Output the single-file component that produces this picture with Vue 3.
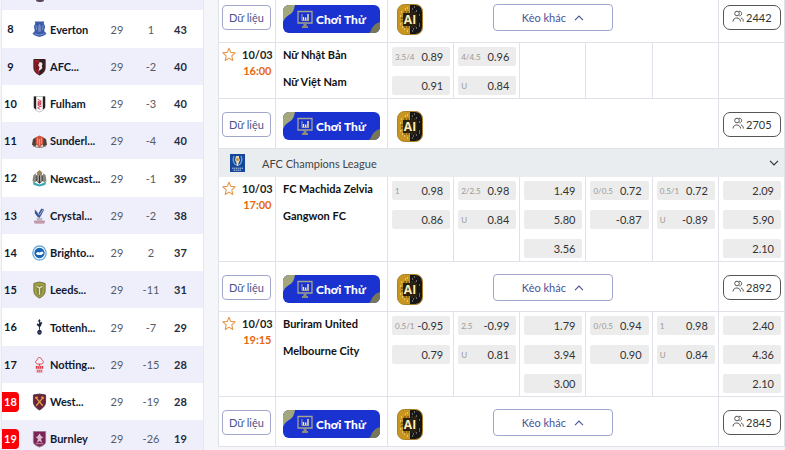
<template>
  <div class="page">
    <aside class="standings">
      <table>
        <colgroup>
          <col class="c-rank">
          <col class="c-team">
          <col class="c-played">
          <col class="c-diff">
          <col class="c-points">
        </colgroup>
        <tbody>
          <tr class="tail">
            <td></td>
            <td>
              <svg class="crest-tail" viewBox="0 0 16 4"><ellipse cx="8" cy="0" rx="4" ry="2" fill="#5b4a55" /></svg>
            </td>
            <td colspan="3"></td>
          </tr>
          <tr v-for="team in teams" :key="team.rank">
            <td class="rank" :class="{ relegated: team.rank >= 18 }"><span>{{ team.rank }}</span></td>
            <td class="team">
              <div class="team-box">
                <svg class="crest" viewBox="0 0 16 18">
                  <path
                    v-for="(p, i) in team.crest"
                    :key="i"
                    :d="p[0]"
                    :fill="p[1]"
                    :stroke="p[2] || 'none'"
                    :stroke-width="p[3] || 1"
                  />
                </svg>
                <span>{{ team.name }}</span>
              </div>
            </td>
            <td class="num">29</td>
            <td class="num">{{ team.diff }}</td>
            <td class="points">{{ team.points }}</td>
          </tr>
        </tbody>
      </table>
    </aside>

    <main class="board">
      <table>
        <colgroup>
          <col class="c-time">
          <col class="c-names">
          <col v-for="n in 6" :key="n">
        </colgroup>
        <tbody>
          <template v-for="(row, r) in rows" :key="r">
            <tr v-if="row.type === 'actions'" class="actions" :class="{ first: r === 0 }">
              <td><button type="button" class="btn-data">Dữ liệu</button></td>
              <td>
                <button type="button" class="btn-demo">
                  <svg class="demo-bg" viewBox="0 0 97 28" preserveAspectRatio="none">
                    <path d="M0 0H12C11 5 10 8 6 10C3 12 2 13 0 17Z" fill="#a3a77c" />
                    <path d="M97 17C93 18 91 20 89 23C88 26 87 27 86 28H97Z" fill="#77785a" />
                  </svg>
                  <svg class="monitor" viewBox="0 0 16 20">
                    <path d="M1 2.500H15V14H1Z" fill="none" stroke="#a4a391" stroke-width="1.300" />
                    <path d="M8 14.500V17" stroke="#8d8d80" stroke-width="3" />
                    <path d="M5 18H11" stroke="#b9a95a" stroke-width="1.500" />
                    <path d="M5 5V11.500H12" fill="none" stroke="#c9c294" stroke-width="0.800" />
                    <path d="M6.500 11V8M8.700 11V8.500M11 11V5" stroke="#fff0a8" stroke-width="1.400" />
                  </svg>
                  <span>Chơi Thử</span>
                </button>
              </td>
              <td colspan="5">
                <div class="middle">
                  <button type="button" class="btn-ai" aria-label="AI">
                    <svg viewBox="0 0 26 31">
                      <rect x="0.500" y="0.500" width="25" height="30" rx="7" fill="#c8951f" />
                      <path d="M13 1H18.500Q25 1 25 8V23Q25 30 18.500 30H13Z" fill="#17171a" />
                      <rect x="0.500" y="0.500" width="25" height="30" rx="7" fill="none" stroke="#a98026" stroke-width="1" />
                      <path d="M4 8h1M8 5h1M3 12h1M3 20h1M7 25h1M10 27h1M5 23h1M10 4h1" stroke="#fff1b0" stroke-width="1.200" />
                      <path d="M15 5h1M19 7h1M17 3h1M22 11h1M22 20h1M19 24h1M15 27h1M22 22h1M16 25h1" stroke="#bdb9a8" stroke-width="1.200" />
                      <path d="M6 9H20V22H6Z" fill="#2b200e" />
                      <path d="M8 7V9M11 7V9M15 7V9M18 7V9M8 22V24M11 22V24M15 22V24M18 22V24M4 14H6M4 17H6" stroke="#4a3a18" stroke-width="1" />
                      <text x="13" y="20" text-anchor="middle">AI</text>
                    </svg>
                  </button>
                  <button v-if="row.more" type="button" class="btn-more">
                    <span>Kèo khác</span>
                    <svg viewBox="0 0 10 6"><path d="M1 5.200L5 1L9 5.200" fill="none" stroke="#4a5298" stroke-width="1.100" /></svg>
                  </button>
                </div>
              </td>
              <td>
                <button type="button" class="btn-users">
                  <svg viewBox="0 0 12 12">
                    <g fill="none" stroke="#555" stroke-width="1">
                      <circle cx="5" cy="3.500" r="2.300" />
                      <path d="M7 1.200C10.500 1 10.500 6 7.300 5.900" />
                      <path d="M1 11.500C1 6.800 8.500 6.800 8.500 11.500" />
                      <path d="M9 8C10.500 8.300 11.300 9.500 11.300 11.500" />
                    </g>
                  </svg>
                  <span>{{ row.users }}</span>
                </button>
              </td>
            </tr>

            <tr v-else-if="row.type === 'league'" class="league">
              <td colspan="8">
                <div class="league-box">
                  <svg class="league-logo" viewBox="0 0 15 18">
                    <rect width="15" height="18" fill="#16469c" />
                    <path d="M4 2C2 6 4 10 6 11M11 2C13 6 11 10 9 11" fill="none" stroke="#6aa8dd" stroke-width="1.300" />
                    <path d="M6 2H9V4L10 6L8.500 9V12H6.500V9L5 6Z" fill="#e3d9b8" />
                    <circle cx="7.500" cy="5.500" r="1.600" fill="#c99a3c" />
                    <path d="M2 14.200H13M3.500 16.200H11.500" stroke="#b9cdea" stroke-width="1" stroke-dasharray="1.500 0.500" />
                  </svg>
                  <span>{{ row.name }}</span>
                  <svg class="chevron" viewBox="0 0 10 6"><path d="M1 0.800L5 5L9 0.800" fill="none" stroke="#333" stroke-width="1.200" /></svg>
                </div>
              </td>
            </tr>

            <tr v-else class="match">
              <td>
                <div class="when">
                  <svg class="star" viewBox="0 0 14 15">
                    <path d="M7 1.200L8.700 5.400L13.200 5.800L9.800 8.900L10.800 13.500L7 11.100L3.200 13.500L4.200 8.900L0.800 5.800L5.300 5.400Z" fill="none" stroke="#e8964a" stroke-width="1.100" stroke-linejoin="round" />
                  </svg>
                  <div class="clock">
                    <span>10/03</span>
                    <span class="hour">{{ row.hour }}</span>
                  </div>
                </div>
              </td>
              <td>
                <div class="names">
                  <span>{{ row.home }}</span>
                  <span>{{ row.away }}</span>
                </div>
              </td>
              <td v-for="(col, c) in row.odds" :key="c">
                <div class="odds">
                  <div v-for="(o, i) in col" :key="i" class="odd">
                    <small>{{ o[0] }}</small>
                    <span>{{ o[1] }}</span>
                  </div>
                </div>
              </td>
            </tr>
          </template>
        </tbody>
      </table>
    </main>
  </div>
</template>

<script setup>
const shield = 'M2 1H14V10C14 14 11 16 8 17.500C5 16 2 14 2 10Z';

// each crest is a list of [path, fill, stroke, stroke width]
const teams = [
  {
    rank: 8, name: 'Everton', diff: 1, points: 43,
    crest: [
      ['M3 1H13L12.500 3L14 6L13 11L15.500 14L13 16L8 17.500L3 16L0.500 14L3 11L2 6L3.500 3Z', '#3c5ca8'],
      ['M6.500 12V6L8 3.500L9.500 6V12Z', '#6f8ac6'],
      ['M4 5L5 10M12 5L11 10M2.500 14L8 15.500L13.500 14', 'none', '#8fa6d6', 0.8]
    ]
  },
  {
    rank: 9, name: 'AFC...', diff: -2, points: 40,
    crest: [
      [shield, '#a01c26', '#2b1a1e', 1],
      ['M8 1.500H13.500V10C13.500 13 11 15.500 8 17Z', '#2a2024'],
      ['M4.500 4V12M6.500 4V14', 'none', '#5a1018', 1],
      ['M8 4C11 3 12 6 10.500 7.500L11 10C9 13 7 12 6.500 15L8 9L6.500 7Z', '#f1e4e2']
    ]
  },
  {
    rank: 10, name: 'Fulham', diff: -3, points: 40,
    crest: [
      ['M2 1H14V12C14 15 11 16.500 8 17.500C5 16.500 2 15 2 12Z', '#fff', '#999', 0.6],
      ['M2 1H4.500V15C3 14 2 13.500 2 12ZM11.500 1H14V12C14 13.500 13 14 11.500 15Z', '#222'],
      ['M6 4L10 6L6 8L10 10M6 6L10 8L6 10L10 12M10 11L6 13L9 15', 'none', '#c93a4c', 1]
    ]
  },
  {
    rank: 11, name: 'Sunderl...', diff: -4, points: 40,
    crest: [
      ['M1 7L4 5L5 13L3 15L0 13ZM15 7L12 5L11 13L13 15L16 13Z', '#4e4038'],
      ['M4 5L8 3L12 5V12L8 16L4 12Z', '#d4533f'],
      ['M6 6V12M8 7V14M10 6V12', 'none', '#f0a495', 0.9],
      ['M1 14Q8 17.500 15 14', 'none', '#8f7a68', 1.2]
    ]
  },
  {
    rank: 12, name: 'Newcast...', diff: -1, points: 39,
    crest: [
      ['M1.500 6L4 4L5 12L3 14L0.500 12ZM14.500 6L12 4L11 12L13 14L15.500 12Z', '#8b867a'],
      ['M5 3L8 0.500L11 3L10.500 6H5.500Z', '#9b8a5a'],
      ['M4.500 6H11.500V12L8 15L4.500 12Z', '#333'],
      ['M6.500 6V13M9.500 6V13', 'none', '#e8e4da', 1.1],
      ['M0.500 13L8 16L15.500 13L14 16.500L8 18L2 16.500Z', '#3ba7b0']
    ]
  },
  {
    rank: 13, name: 'Crystal...', diff: -2, points: 38,
    crest: [
      ['M3 2L7 6L10 1L13 2L10 8L8 11L6 10L3 6Z', '#3c569b'],
      ['M5 4L8 8L12 2', 'none', '#c4cde6', 0.8],
      ['M5 11H11V14H5Z', '#b9b4c2'],
      ['M2 14H14L13 17H3Z', '#b07a8c'],
      ['M3 15.500H13', 'none', '#e8dfe8', 0.7]
    ]
  },
  {
    rank: 14, name: 'Brighto...', diff: 2, points: 37,
    crest: [
      ['M8 1.500A7 7.500 0 1 1 7.990 1.500Z', '#fff', '#6aaadb', 1.4],
      ['M8 3.500A5.500 5.500 0 1 1 7.990 3.500Z', '#1765b3'],
      ['M4 9.500L6 8L8 8.500L11 7.500L12.500 9L10 11H6Z', '#fff']
    ]
  },
  {
    rank: 15, name: 'Leeds...', diff: -11, points: 31,
    crest: [
      ['M2 2L8 0.500L14 2V10C14 14 11 16 8 17.500C5 16 2 14 2 10Z', '#a2a03f', '#6c6e3c', 1],
      ['M4.500 4H11.500L10.500 13L8 16L5.500 13Z', '#7d8246'],
      ['M5 5L8 7L11 5M8 7V14', 'none', '#e8e6b8', 1.3]
    ]
  },
  {
    rank: 16, name: 'Tottenh...', diff: -7, points: 29,
    crest: [
      ['M6 3L8 0.500L9 2L8.500 4L11 4L9.500 8L8.500 9V12H7.500V9L5 6.500L6 5L7.500 6L7.500 3Z', '#1d2547'],
      ['M8 12A2.400 2.600 0 1 1 7.990 12Z', '#1d2547'],
      ['M6.500 14L9.500 15.500', 'none', '#8c92ad', 0.6]
    ]
  },
  {
    rank: 17, name: 'Notting...', diff: -15, points: 28,
    crest: [
      ['M8 1C10 1 10 3 11 4C13 5 12 8 10 8H6C4 8 3 5 5 4C6 3 6 1 8 1ZM8 8V10', 'none', '#dd3b48', 1],
      ['M4 10H12V13H4Z', '#dd3b48'],
      ['M5 14H11V17H5Z', '#e46570'],
      ['M6 10V13M8 10V13M10 10V13M7 14V17M9 14V17', 'none', '#f4c0c8', 0.6]
    ]
  },
  {
    rank: 18, name: 'West...', diff: -19, points: 28,
    crest: [
      ['M1.500 1.500Q8 -0.500 14.500 1.500V9C14.500 13 11 16 8 17.500C5 16 1.500 13 1.500 9Z', '#6d2338', '#4d3c52', 1],
      ['M4 4L11.500 13M12 4L4.500 13', 'none', '#e0a548', 1.3],
      ['M3.500 5L6 3.500M12.500 5L10 3.500', 'none', '#e0a548', 1.6]
    ]
  },
  {
    rank: 19, name: 'Burnley', diff: -26, points: 19,
    crest: [
      ['M1.500 1H14.500V12C14.500 15 11 16.500 8 17.500C5 16.500 1.500 15 1.500 12Z', '#7c2456', '#9a7690', 1],
      ['M8 3L10 6L12 7L9.500 9L11 13L8 11L5 13L6.500 9L4 7L6 6Z', '#d9bccd'],
      ['M4 14H12', 'none', '#c18fb0', 1]
    ]
  }
];

const rows = [
  { type: 'actions', more: true, users: 2442 },
  {
    type: 'match', hour: '16:00', home: 'Nữ Nhật Bản', away: 'Nữ Việt Nam',
    odds: [
      [['3.5/4', '0.89'], ['', '0.91']],
      [['4/4.5', '0.96'], ['U', '0.84']],
      [], [], [], []
    ]
  },
  { type: 'actions', more: false, users: 2705 },
  { type: 'league', name: 'AFC Champions League' },
  {
    type: 'match', hour: '17:00', home: 'FC Machida Zelvia', away: 'Gangwon FC',
    odds: [
      [['1', '0.98'], ['', '0.86']],
      [['2/2.5', '0.98'], ['U', '0.84']],
      [['', '1.49'], ['', '5.80'], ['', '3.56']],
      [['0/0.5', '0.72'], ['', '-0.87']],
      [['0.5/1', '0.72'], ['U', '-0.89']],
      [['', '2.09'], ['', '5.90'], ['', '2.10']]
    ]
  },
  { type: 'actions', more: true, users: 2892 },
  {
    type: 'match', hour: '19:15', home: 'Buriram United', away: 'Melbourne City',
    odds: [
      [['0.5/1', '-0.95'], ['', '0.79']],
      [['2.5', '-0.99'], ['U', '0.81']],
      [['', '1.79'], ['', '3.94'], ['', '3.00']],
      [['0/0.5', '0.94'], ['', '0.90']],
      [['1', '0.98'], ['U', '0.84']],
      [['', '2.40'], ['', '4.36'], ['', '2.10']]
    ]
  },
  { type: 'actions', more: true, users: 2845 }
];
</script>

<style>
body {
  background: #f4f6f9;
  overflow: hidden;
}
</style>

<style scoped>
.page {
  display: flex;
  align-items: flex-start;
  gap: 14px;
  padding-left: 1px;
  font-family: Lato, "Open Sans", "Liberation Sans", sans-serif;
  font-size: 11px;
  color: #333;
}

table {
  width: 100%;
  table-layout: fixed;
  border-collapse: separate;
  border-spacing: 0;
}

td {
  box-sizing: border-box;
  padding: 0;
}

button {
  box-sizing: border-box;
  margin: 0;
  padding: 0;
  font-family: inherit;
  cursor: pointer;
}

/* standings */
.standings {
  flex: none;
  box-sizing: border-box;
  width: 203px;
  border-left: 1px solid #e6e8f0;
  border-right: 1px solid #e6e8f0;
  background: #fff;
}

.c-rank { width: 30px; }
.c-team { width: 70px; }
.c-played { width: 30px; }
.c-diff { width: 38px; }

.standings tr {
  height: 37px;
}

.standings tr:nth-child(4n + 2) {
  height: 38px;
}

.standings tr.tail {
  height: 10px;
}

.standings tr:nth-child(odd) {
  background: #efeffc;
}

.crest-tail {
  display: block;
  width: 16px;
  height: 4px;
  margin-bottom: 6px;
}

.rank {
  font-weight: 700;
  color: #10192f;
}

.rank span {
  display: block;
  width: 17px;
  line-height: 20px;
  text-align: center;
}

.relegated span {
  background: #fb0007;
  color: #fff;
  border-radius: 0 4px 4px 0;
}

.team-box {
  display: flex;
  align-items: center;
  gap: 3px;
  font-weight: 700;
  color: #10192f;
  white-space: nowrap;
}

.crest {
  flex: none;
  width: 15px;
  height: 18px;
}

.num {
  text-align: center;
  color: #555b66;
}

.points {
  padding-right: 12px;
  text-align: center;
  font-weight: 700;
  color: #262c3d;
}

/* odds board */
.board {
  flex: 1;
  min-width: 0;
  box-sizing: border-box;
  border-left: 1px solid #e0e2ea;
  background: #fff;
}

.c-time { width: 57px; }
.c-names { width: 112px; }

.board td {
  vertical-align: top;
  border-right: 1px solid #e0e2ea;
  border-bottom: 1px solid #e0e2ea;
}

.actions {
  height: 50px;
}

.actions td {
  padding-top: 12px;
}

.actions.first {
  height: 43px;
}

.actions.first td {
  padding-top: 4px;
}

.btn-data {
  display: block;
  width: 49px;
  height: 25px;
  margin: 1px 0 0 3px;
  border: 1px solid #a3a7cd;
  border-radius: 4px;
  background: #fff;
  color: #4a5490;
  font-size: 11px;
}

.btn-demo {
  position: relative;
  display: flex;
  align-items: center;
  justify-content: center;
  gap: 3px;
  width: 97px;
  height: 28px;
  margin: 1px 0 0 7px;
  border: 0;
  border-radius: 6px;
  overflow: hidden;
  background: #1932d0;
  color: #fff;
  font-size: 12px;
  font-weight: 900;
  white-space: nowrap;
}

.demo-bg {
  position: absolute;
  inset: 0;
  width: 100%;
  height: 100%;
}

.monitor {
  position: relative;
  width: 16px;
  height: 20px;
}

.btn-demo span {
  position: relative;
}

.middle {
  display: grid;
  grid-template-columns: 1fr auto 1fr;
  align-items: start;
  padding-left: 9px;
  padding-right: 9px;
}

.btn-ai {
  width: 26px;
  height: 31px;
  border: 0;
  background: none;
}

.btn-ai svg {
  display: block;
  width: 26px;
  height: 31px;
}

.btn-ai text {
  font-family: "Open Sans", sans-serif;
  font-size: 12px;
  font-weight: 700;
  fill: #ffeeb8;
}

.btn-more {
  display: flex;
  align-items: center;
  justify-content: center;
  gap: 8px;
  width: 120px;
  height: 27px;
  border: 1px solid #a3a7cd;
  border-radius: 4px;
  background: #fff;
  color: #4a5298;
  font-size: 11px;
}

.btn-more svg {
  width: 10px;
  height: 6px;
}

.btn-users {
  display: flex;
  align-items: center;
  justify-content: center;
  gap: 2px;
  width: 58px;
  height: 25px;
  margin: 1px 0 0 4px;
  border: 1px solid #555;
  border-radius: 7px;
  background: #fff;
  color: #333;
  font-size: 11px;
}

.btn-users svg {
  width: 12px;
  height: 12px;
  margin-bottom: 3px;
}

.league td {
  background: #e9edf0;
  border-bottom: 0;
}

.league-box {
  display: flex;
  align-items: center;
  height: 28px;
  padding: 0 5px 0 11px;
  font-size: 11px;
  color: #444;
}

.league-logo {
  width: 15px;
  height: 18px;
  margin-right: 17px;
}

.chevron {
  width: 10px;
  height: 6px;
  margin-left: auto;
}

.match {
  height: 56px;
}

.when {
  display: flex;
  gap: 6px;
  padding: 4px 0 0 3px;
}

.star {
  width: 14px;
  height: 15px;
}

.clock {
  display: flex;
  flex-direction: column;
  align-items: center;
  line-height: 16px;
  font-weight: 700;
  color: #222;
}

.hour {
  color: #e8670c;
}

.names {
  display: flex;
  flex-direction: column;
  gap: 11px;
  padding: 4px 0 0 7px;
  line-height: 16px;
  font-size: 11px;
  font-weight: 700;
  color: #111;
  white-space: nowrap;
}

.odds {
  display: flex;
  flex-direction: column;
  gap: 10px;
  padding: 4px 3px 3px 4px;
}

.odd {
  display: flex;
  align-items: center;
  justify-content: space-between;
  height: 19px;
  padding: 0 7px 0 3px;
  border-radius: 2px;
  background: #ececec;
}

.odd small {
  font-size: 8px;
  color: #999;
}
</style>
